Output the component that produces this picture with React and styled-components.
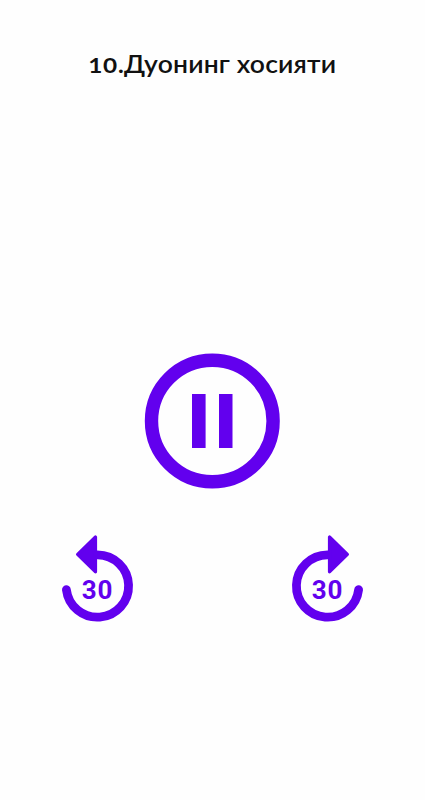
import React from 'react';
import styled, { createGlobalStyle } from 'styled-components';


const GlobalStyle = createGlobalStyle`
  :root {
    --primary: #6200ee;
    --background: #fefefe;
    --text: #111;
  }

  body {
    margin: 0;
    background: var(--background);
  }
`

const Player = styled.main`
  display: flex;
  flex-direction: column;
  align-items: center;
  box-sizing: border-box;
  width: 100%;
  height: 800px;
  padding-top: 47px;
  overflow: hidden;
`

const Title = styled.h1`
  margin: 0;
  height: 32px;
  color: var(--text);
  font-family: Lato, "Open Sans", sans-serif;
  font-size: 25px;
  font-weight: 600;
  line-height: 32px;
  letter-spacing: 0.15px;
  white-space: nowrap;
  transform: scaleX(1.06);
`

const TrackNumber = styled.span`
  display: inline-block;
  margin-left: 3px;
  font-size: 20px;
  font-weight: 700;
  letter-spacing: 0.4px;
  transform: scaleX(1.15);
  transform-origin: right;
`

const IconButton = styled.button`
  display: block;
  padding: 0;
  border: 0;
  background: none;
  color: var(--primary);
  cursor: pointer;

  svg {
    display: block;
  }
`

const PauseButton = styled(IconButton)`
  margin-top: 273px;
`

const SeekRow = styled.div`
  display: flex;
  justify-content: space-between;
  width: 305px;
  margin-top: 45px;
`

const SeekButton = styled(IconButton)`
  display: grid;
  width: 75px;
  height: 90px;

  > * {
    grid-area: 1 / 1;
  }
`

const SeekIcon = styled.svg`
  transform: ${({ $forward }) => $forward ? 'scaleX(-1)' : 'none'};
`

const Seconds = styled.span`
  align-self: start;
  justify-self: center;
  padding: 40px 0 0;
  font: 700 26px/32px Roboto, sans-serif;
  letter-spacing: 0.9px;
`

const PauseIcon = () => (
  <svg width="137" height="137" viewBox="0 0 137 137" fill="currentColor">
    <circle cx="68.3" cy="69" r="60.8" fill="none" stroke="currentColor" strokeWidth="13.4" />
    <path d="M48 42h13.6v54H48zM75 42h13.5v54H75z" />
  </svg>
)

const Seek = ({ label, forward, seconds }) => (
  <SeekButton aria-label={label}>
    <SeekIcon $forward={forward} width="75" height="90" viewBox="0 0 75 90">
      <path d="M37.5 20.8A31.2 31.2 0 1 1 6.4 55.7" fill="none" stroke="currentColor" strokeWidth="8.8" strokeLinecap="round" />
      <path d="M17.6 20.4 35.5 3V37.8Z" fill="currentColor" stroke="currentColor" strokeWidth="3.2" strokeLinejoin="round" />
    </SeekIcon>
    <Seconds>{seconds}</Seconds>
  </SeekButton>
)

const App = () => {
  return (
    <>
      <GlobalStyle />
      <Player>
        <Title><TrackNumber>10</TrackNumber>.Дуонинг хосияти</Title>
        <PauseButton aria-label="Pause">
          <PauseIcon />
        </PauseButton>
        <SeekRow>
          <Seek label="Rewind" seconds={30} />
          <Seek label="Forward" seconds={30} forward />
        </SeekRow>
      </Player>
    </>
  )
}


export default App;
